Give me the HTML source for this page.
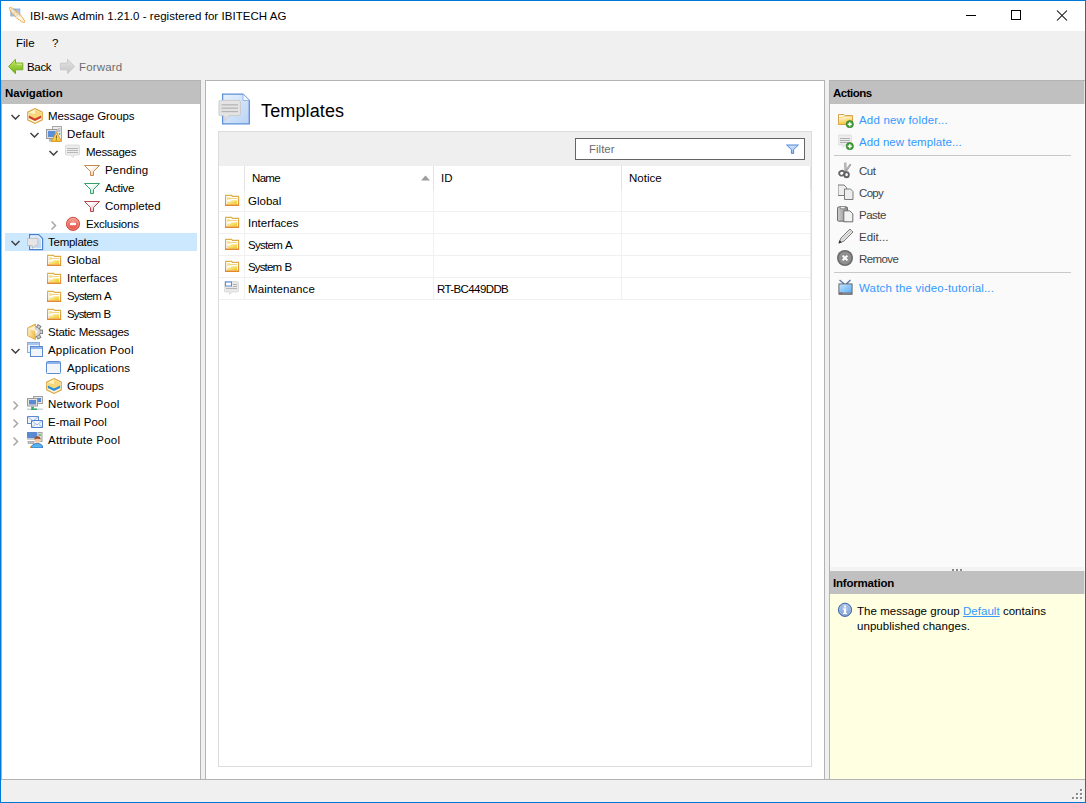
<!DOCTYPE html><html><head><meta charset="utf-8"><title>IBI-aws Admin</title><style>
*{margin:0;padding:0;box-sizing:border-box}
html,body{width:1086px;height:803px;overflow:hidden;background:#f0f0f0}
body{position:relative;font:12px/14px "Liberation Sans",sans-serif;color:#000}
.r{position:absolute;display:block}
.t{position:absolute;white-space:nowrap;font:11.5px/14px "Liberation Sans",sans-serif}
.b{font-weight:bold}
.lk{color:#3399ff}
.ac{color:#444}
</style></head><body><div class="r" style="left:0px;top:0px;width:1086px;height:31px;background:#fff;"></div>
<svg class="r" style="left:8px;top:6px" width="18" height="18" viewBox="0 0 18 18">
<rect x="2.8" y="3" width="9" height="7" fill="#a9c6e8" stroke="#88a8d0" stroke-width="0.8"/>
<path d="M5.5 9 L7.5 4.5 L9.5 9" fill="none" stroke="#a88420" stroke-width="1.3"/>
<ellipse cx="9" cy="9" rx="10.5" ry="2.3" transform="rotate(44 9 9)" fill="#fff4dc" fill-opacity="0.75" stroke="#eba84a" stroke-width="1.1" stroke-dasharray="1.4 0.6"/>
</svg>
<div class="t " style="left:30px;top:9px;letter-spacing:0.043px;">IBI-aws Admin 1.21.0 - registered for IBITECH AG</div>
<div class="r" style="left:966px;top:15px;width:10px;height:1px;background:#000;"></div>
<div class="r" style="left:1011px;top:10px;width:10px;height:10px;border:1px solid #000"></div>
<svg class="r" style="left:1056px;top:10px" width="12" height="11" viewBox="0 0 12 11"><path d="M1 0.5 L11 10.5 M11 0.5 L1 10.5" stroke="#000" stroke-width="1.05" fill="none"/></svg>
<div class="t " style="left:16px;top:36px;letter-spacing:0.000px;">File</div>
<div class="t " style="left:52px;top:36px;">?</div>
<svg class="r" style="left:8px;top:58px" width="16" height="16" viewBox="0 0 16 16">
<defs><linearGradient id="gb" x1="0" y1="0" x2="0" y2="1"><stop offset="0" stop-color="#c8ec6a"/><stop offset="1" stop-color="#6fae12"/></linearGradient></defs>
<path d="M0.6 8.5 L7.5 1.2 L7.5 5 L14.8 5 L14.8 11.8 L7.5 11.8 L7.5 15.8 Z" fill="url(#gb)" stroke="#6faa1c" stroke-width="0.9"/>
<path d="M8.5 6.2 L13.8 6.2" stroke="#e4f7b0" stroke-width="1" opacity="0.8"/>
</svg>
<div class="t " style="left:27px;top:60px;letter-spacing:-0.333px;">Back</div>
<svg class="r" style="left:59px;top:58px" width="17" height="17" viewBox="0 0 17 17">
<defs><linearGradient id="gf" x1="0" y1="0" x2="0" y2="1"><stop offset="0" stop-color="#e4e4e4"/><stop offset="1" stop-color="#c4c4c4"/></linearGradient></defs>
<path d="M15.6 8.5 L8.5 1.2 L8.5 5.2 L1.4 5.2 L1.4 11.8 L8.5 11.8 L8.5 15.8 Z" fill="url(#gf)" stroke="#c4c4c4" stroke-width="0.8"/>
</svg>
<div class="t " style="left:79px;top:60px;letter-spacing:0.167px;color:#6d6d6d">Forward</div>
<div class="r" style="left:1px;top:80px;width:200px;height:700px;background:#fff;border:1px solid #b3b3b3"></div>
<div class="r" style="left:2px;top:81px;width:198px;height:23px;background:#c0c0c0;"></div>
<div class="t b" style="left:5px;top:86px;letter-spacing:-0.111px;">Navigation</div>
<div class="r" style="left:205px;top:80px;width:620px;height:700px;background:#fff;border:1px solid #b3b3b3"></div>
<div class="r" style="left:829px;top:80px;width:256px;height:700px;background:#fafafa;border-left:1px solid #b3b3b3;border-top:1px solid #b3b3b3;border-bottom:1px solid #b3b3b3"></div>
<div class="r" style="left:830px;top:81px;width:255px;height:23px;background:#c0c0c0;"></div>
<div class="t b" style="left:833px;top:86px;letter-spacing:-0.500px;">Actions</div>
<div class="r" style="left:830px;top:567px;width:255px;height:4px;background:#f3f3f3;"></div>
<div class="r" style="left:953px;top:570px;width:2px;height:2px;background:#fff;"></div>
<div class="r" style="left:952px;top:569px;width:2px;height:2px;background:#8a8a8a;"></div>
<div class="r" style="left:957px;top:570px;width:2px;height:2px;background:#fff;"></div>
<div class="r" style="left:956px;top:569px;width:2px;height:2px;background:#8a8a8a;"></div>
<div class="r" style="left:961px;top:570px;width:2px;height:2px;background:#fff;"></div>
<div class="r" style="left:960px;top:569px;width:2px;height:2px;background:#8a8a8a;"></div>
<div class="r" style="left:830px;top:571px;width:255px;height:23px;background:#c0c0c0;"></div>
<div class="t b" style="left:833px;top:576px;letter-spacing:-0.200px;">Information</div>
<div class="r" style="left:830px;top:594px;width:255px;height:185px;background:#ffffe1;"></div>
<div class="r" style="left:1084px;top:81px;width:1px;height:698px;background:rgba(255,255,255,0.55);"></div>
<div class="r" style="left:1px;top:779px;width:1084px;height:1px;background:#b3b3b3;"></div>
<div class="r" style="left:1081px;top:790px;width:2px;height:2px;background:#fff;"></div>
<div class="r" style="left:1080px;top:789px;width:2px;height:2px;background:#8c8c8c;"></div>
<div class="r" style="left:1077px;top:794px;width:2px;height:2px;background:#fff;"></div>
<div class="r" style="left:1076px;top:793px;width:2px;height:2px;background:#8c8c8c;"></div>
<div class="r" style="left:1081px;top:794px;width:2px;height:2px;background:#fff;"></div>
<div class="r" style="left:1080px;top:793px;width:2px;height:2px;background:#8c8c8c;"></div>
<div class="r" style="left:1073px;top:798px;width:2px;height:2px;background:#fff;"></div>
<div class="r" style="left:1072px;top:797px;width:2px;height:2px;background:#8c8c8c;"></div>
<div class="r" style="left:1077px;top:798px;width:2px;height:2px;background:#fff;"></div>
<div class="r" style="left:1076px;top:797px;width:2px;height:2px;background:#8c8c8c;"></div>
<div class="r" style="left:1081px;top:798px;width:2px;height:2px;background:#fff;"></div>
<div class="r" style="left:1080px;top:797px;width:2px;height:2px;background:#8c8c8c;"></div>
<div class="r" style="left:5px;top:233px;width:192px;height:18px;background:#cce8ff;"></div>
<svg class="r" style="left:10px;top:113px" width="10" height="7" viewBox="0 0 10 7"><path d="M1.5 2 L5.5 6 L9.5 2" fill="none" stroke="#404040" stroke-width="1.5"/></svg>
<svg class="r" style="left:27px;top:108px" width="16" height="16" viewBox="0 0 16 16">
<path d="M8 0.6 L15.3 4.2 L15.3 11.8 L8 15.4 L0.7 11.8 L0.7 4.2 Z" fill="#fff8dc" stroke="#d9a43c" stroke-width="1.1"/>
<path d="M8 1.8 L14.2 4.8 L14.2 8.4 L8 11.4 L1.8 8.4 L1.8 4.8 Z" fill="#f7d77a"/>
<path d="M8 1.8 L8 6 L1.8 4.8 Z" fill="#fff3c4"/>
<path d="M1.8 7.6 L8 10.6 L14.2 7.6 L14.2 10 L8 13 L1.8 10 Z" fill="#d23c2c"/>
</svg>
<div class="t " style="left:48px;top:109px;letter-spacing:-0.077px;">Message Groups</div>
<svg class="r" style="left:29px;top:131px" width="10" height="7" viewBox="0 0 10 7"><path d="M1.5 2 L5.5 6 L9.5 2" fill="none" stroke="#404040" stroke-width="1.5"/></svg>
<svg class="r" style="left:46px;top:126px" width="16" height="16" viewBox="0 0 16 16">
<defs><linearGradient id="g1" x1="0" y1="0" x2="0" y2="1"><stop offset="0" stop-color="#fbe98a"/><stop offset="1" stop-color="#f2c631"/></linearGradient></defs>
<rect x="6.5" y="0.5" width="9" height="13.5" fill="#ececec" stroke="#a8a8a8"/>
<rect x="12" y="2.5" width="2.5" height="1" fill="#9a9a9a"/><rect x="12" y="4.5" width="2.5" height="1" fill="#9a9a9a"/>
<circle cx="13.6" cy="7.8" r="0.9" fill="#3cb043"/>
<rect x="0.5" y="3.5" width="10.5" height="9" fill="#dedede" stroke="#9a9a9a"/>
<rect x="2" y="5" width="7.5" height="6" fill="#5d8fd8"/>
<rect x="3" y="13" width="3" height="2.5" fill="#a9b6c8"/>
<path d="M10.4 6.4 L15.6 15.4 L5.2 15.4 Z" fill="url(#g1)" stroke="#db9a2a" stroke-width="1"/>
<rect x="9.9" y="9.3" width="1" height="3.2" fill="#7a5a1a"/><rect x="9.9" y="13.3" width="1" height="1" fill="#7a5a1a"/>
</svg>
<div class="t " style="left:67px;top:127px;letter-spacing:0.167px;">Default</div>
<svg class="r" style="left:48px;top:149px" width="10" height="7" viewBox="0 0 10 7"><path d="M1.5 2 L5.5 6 L9.5 2" fill="none" stroke="#404040" stroke-width="1.5"/></svg>
<svg class="r" style="left:65px;top:144px" width="16" height="16" viewBox="0 0 16 16">
<path d="M1.5 1 Q0.5 1 0.5 2 L0.5 10 Q0.5 11 1.5 11 L6 11 L8 13.5 L9 11 L13.5 11 Q14.5 11 14.5 10 L14.5 2 Q14.5 1 13.5 1 Z" fill="#ececec" stroke="#dcdcdc"/>
<rect x="2" y="4" width="11" height="1" fill="#b8b8b8"/><rect x="2" y="6" width="11" height="1" fill="#b8b8b8"/><rect x="2" y="8" width="11" height="1" fill="#b8b8b8"/>
</svg>
<div class="t " style="left:86px;top:145px;letter-spacing:-0.286px;">Messages</div>
<svg class="r" style="left:84px;top:165px" width="16" height="12" viewBox="0 0 16 12"><defs><linearGradient id="g2" x1="0" y1="0" x2="1" y2="1"><stop offset="0.3" stop-color="#fff"/><stop offset="1" stop-color="#e9c7a4"/></linearGradient></defs>
<path d="M0.5 0.5 L15.5 0.5 L9.5 6.5 L9.5 10.5 L6.5 10.5 L6.5 6.5 Z" fill="url(#g2)" stroke="#c7874e" stroke-width="1"/></svg>
<div class="t " style="left:105px;top:163px;letter-spacing:0.167px;">Pending</div>
<svg class="r" style="left:84px;top:183px" width="16" height="12" viewBox="0 0 16 12"><defs><linearGradient id="g3" x1="0" y1="0" x2="1" y2="1"><stop offset="0.3" stop-color="#fff"/><stop offset="1" stop-color="#a6dcc0"/></linearGradient></defs>
<path d="M0.5 0.5 L15.5 0.5 L9.5 6.5 L9.5 10.5 L6.5 10.5 L6.5 6.5 Z" fill="url(#g3)" stroke="#35a06a" stroke-width="1"/></svg>
<div class="t " style="left:105px;top:181px;letter-spacing:-0.400px;">Active</div>
<svg class="r" style="left:84px;top:201px" width="16" height="12" viewBox="0 0 16 12"><defs><linearGradient id="g4" x1="0" y1="0" x2="1" y2="1"><stop offset="0.3" stop-color="#fff"/><stop offset="1" stop-color="#e4aaaa"/></linearGradient></defs>
<path d="M0.5 0.5 L15.5 0.5 L9.5 6.5 L9.5 10.5 L6.5 10.5 L6.5 6.5 Z" fill="url(#g4)" stroke="#b8474a" stroke-width="1"/></svg>
<div class="t " style="left:105px;top:199px;letter-spacing:0.000px;">Completed</div>
<svg class="r" style="left:50px;top:220px" width="7" height="10" viewBox="0 0 7 10"><path d="M1.5 1.5 L5.5 5.5 L1.5 9.5" fill="none" stroke="#a6a6a6" stroke-width="1.5"/></svg>
<svg class="r" style="left:65px;top:216px" width="16" height="16" viewBox="0 0 16 16">
<defs><radialGradient id="g5" cx="0.5" cy="0.3" r="0.7"><stop offset="0" stop-color="#f7a49a"/><stop offset="1" stop-color="#de3b2f"/></radialGradient></defs>
<circle cx="8" cy="7.9" r="6.6" fill="url(#g5)" stroke="#cf4a3c" stroke-width="0.9"/>
<circle cx="8" cy="7.9" r="5.4" fill="none" stroke="#fbd0c8" stroke-width="0.7" opacity="0.7"/>
<rect x="5" y="6.9" width="6" height="2.2" fill="#fff"/>
</svg>
<div class="t " style="left:86px;top:217px;letter-spacing:-0.222px;">Exclusions</div>
<svg class="r" style="left:10px;top:239px" width="10" height="7" viewBox="0 0 10 7"><path d="M1.5 2 L5.5 6 L9.5 2" fill="none" stroke="#404040" stroke-width="1.5"/></svg>
<svg class="r" style="left:27px;top:234px" width="17" height="17" viewBox="0 0 17 17">
<defs><linearGradient id="g6" x1="0" y1="0" x2="1" y2="1"><stop offset="0" stop-color="#e6f0fc"/><stop offset="1" stop-color="#bcd5f4"/></linearGradient></defs>
<path d="M2.6 0.6 L11.6 0.6 L15.6 4.6 L15.6 15.6 L2.6 15.6 Z" fill="#fff" stroke="#4a7fd0" stroke-width="1.2"/>
<path d="M3.8 1.9 L11 1.9 L14.3 5.2 L14.3 14.3 L3.8 14.3 Z" fill="url(#g6)"/>
<path d="M1 4.4 L10.2 4.4 Q10.9 4.4 10.9 5.1 L10.9 10.9 Q10.9 11.6 10.2 11.6 L8 11.6 L5.6 14.4 L5.3 11.6 L1 11.6 Q0.3 11.6 0.3 10.9 L0.3 5.1 Q0.3 4.4 1 4.4 Z" fill="#e6e6e6" stroke="#bcbcbc" stroke-width="0.9"/>
</svg>
<div class="t " style="left:48px;top:235px;letter-spacing:-0.250px;">Templates</div>
<svg class="r" style="left:47px;top:254px" width="16" height="13" viewBox="0 0 16 13">
<defs><linearGradient id="g7o" x1="0" y1="0" x2="0" y2="1"><stop offset="0" stop-color="#dcb04a"/><stop offset="1" stop-color="#e48a2a"/></linearGradient>
<linearGradient id="g7f" x1="0" y1="0" x2="1" y2="1"><stop offset="0" stop-color="#fdf3c4"/><stop offset="1" stop-color="#f1c712"/></linearGradient></defs>
<path d="M0.6 1.4 L6.6 1.4 L7.4 2.4 L13.6 2.4 L13.6 11.4 L0.6 11.4 Z" fill="#fffef8" stroke="url(#g7o)" stroke-width="1.1"/>
<rect x="2" y="3.3" width="3.2" height="2.3" fill="#f6dd82"/>
<rect x="5" y="4" width="7" height="1" fill="#efd580"/>
<path d="M2 7.4 L5.4 7.4 L6.4 6.3 L12.1 6.3 L12.1 10.6 L2 10.6 Z" fill="url(#g7f)"/>
<rect x="0.4" y="10.6" width="13.4" height="1.3" fill="#e2892e"/>
</svg>
<div class="t " style="left:67px;top:253px;letter-spacing:0.000px;">Global</div>
<svg class="r" style="left:47px;top:272px" width="16" height="13" viewBox="0 0 16 13">
<defs><linearGradient id="g8o" x1="0" y1="0" x2="0" y2="1"><stop offset="0" stop-color="#dcb04a"/><stop offset="1" stop-color="#e48a2a"/></linearGradient>
<linearGradient id="g8f" x1="0" y1="0" x2="1" y2="1"><stop offset="0" stop-color="#fdf3c4"/><stop offset="1" stop-color="#f1c712"/></linearGradient></defs>
<path d="M0.6 1.4 L6.6 1.4 L7.4 2.4 L13.6 2.4 L13.6 11.4 L0.6 11.4 Z" fill="#fffef8" stroke="url(#g8o)" stroke-width="1.1"/>
<rect x="2" y="3.3" width="3.2" height="2.3" fill="#f6dd82"/>
<rect x="5" y="4" width="7" height="1" fill="#efd580"/>
<path d="M2 7.4 L5.4 7.4 L6.4 6.3 L12.1 6.3 L12.1 10.6 L2 10.6 Z" fill="url(#g8f)"/>
<rect x="0.4" y="10.6" width="13.4" height="1.3" fill="#e2892e"/>
</svg>
<div class="t " style="left:67px;top:271px;letter-spacing:0.000px;">Interfaces</div>
<svg class="r" style="left:47px;top:290px" width="16" height="13" viewBox="0 0 16 13">
<defs><linearGradient id="g9o" x1="0" y1="0" x2="0" y2="1"><stop offset="0" stop-color="#dcb04a"/><stop offset="1" stop-color="#e48a2a"/></linearGradient>
<linearGradient id="g9f" x1="0" y1="0" x2="1" y2="1"><stop offset="0" stop-color="#fdf3c4"/><stop offset="1" stop-color="#f1c712"/></linearGradient></defs>
<path d="M0.6 1.4 L6.6 1.4 L7.4 2.4 L13.6 2.4 L13.6 11.4 L0.6 11.4 Z" fill="#fffef8" stroke="url(#g9o)" stroke-width="1.1"/>
<rect x="2" y="3.3" width="3.2" height="2.3" fill="#f6dd82"/>
<rect x="5" y="4" width="7" height="1" fill="#efd580"/>
<path d="M2 7.4 L5.4 7.4 L6.4 6.3 L12.1 6.3 L12.1 10.6 L2 10.6 Z" fill="url(#g9f)"/>
<rect x="0.4" y="10.6" width="13.4" height="1.3" fill="#e2892e"/>
</svg>
<div class="t " style="left:67px;top:289px;letter-spacing:-0.714px;word-spacing:1.00px;">System A</div>
<svg class="r" style="left:47px;top:308px" width="16" height="13" viewBox="0 0 16 13">
<defs><linearGradient id="g10o" x1="0" y1="0" x2="0" y2="1"><stop offset="0" stop-color="#dcb04a"/><stop offset="1" stop-color="#e48a2a"/></linearGradient>
<linearGradient id="g10f" x1="0" y1="0" x2="1" y2="1"><stop offset="0" stop-color="#fdf3c4"/><stop offset="1" stop-color="#f1c712"/></linearGradient></defs>
<path d="M0.6 1.4 L6.6 1.4 L7.4 2.4 L13.6 2.4 L13.6 11.4 L0.6 11.4 Z" fill="#fffef8" stroke="url(#g10o)" stroke-width="1.1"/>
<rect x="2" y="3.3" width="3.2" height="2.3" fill="#f6dd82"/>
<rect x="5" y="4" width="7" height="1" fill="#efd580"/>
<path d="M2 7.4 L5.4 7.4 L6.4 6.3 L12.1 6.3 L12.1 10.6 L2 10.6 Z" fill="url(#g10f)"/>
<rect x="0.4" y="10.6" width="13.4" height="1.3" fill="#e2892e"/>
</svg>
<div class="t " style="left:67px;top:307px;letter-spacing:-0.857px;word-spacing:1.00px;">System B</div>
<svg class="r" style="left:27px;top:323px" width="17" height="17" viewBox="0 0 17 17">
<defs><linearGradient id="g11" x1="0" y1="0" x2="1" y2="0.3"><stop offset="0" stop-color="#fff6d6"/><stop offset="1" stop-color="#f0c050"/></linearGradient>
<clipPath id="g11c"><rect x="8.4" y="0" width="9" height="17"/></clipPath></defs>
<path d="M8.4 1 L0.6 5 L0.6 12.6 L8.4 16.6 Z" fill="url(#g11)" stroke="#dcaa40" stroke-width="1"/>
<path d="M8.4 2.5 L2 5.8 L8.4 8.5 Z" fill="#fff8e0" opacity="0.8"/>
<g clip-path="url(#g11c)">
<circle cx="8.6" cy="8.8" r="5" fill="#d4d4d4" stroke="#8a8a8a" stroke-width="1"/>
<rect x="12.8" y="7.1" width="2.8" height="3.4" fill="#d0d0d0" stroke="#7a7a7a" stroke-width="0.9"/>
<rect x="10" y="2.3" width="3.4" height="3" fill="#d0d0d0" stroke="#7a7a7a" stroke-width="0.9" transform="rotate(30 11.7 3.8)"/>
<rect x="10" y="12.3" width="3.4" height="3" fill="#d0d0d0" stroke="#7a7a7a" stroke-width="0.9" transform="rotate(-30 11.7 13.8)"/>
<circle cx="8.6" cy="8.8" r="4.3" fill="#d6d6d6"/>
<circle cx="8.6" cy="8.8" r="1.8" fill="#fff"/>
</g>
</svg>
<div class="t " style="left:48px;top:325px;letter-spacing:-0.245px;word-spacing:0.43px;">Static Messages</div>
<svg class="r" style="left:10px;top:347px" width="10" height="7" viewBox="0 0 10 7"><path d="M1.5 2 L5.5 6 L9.5 2" fill="none" stroke="#404040" stroke-width="1.5"/></svg>
<svg class="r" style="left:27px;top:342px" width="16" height="16" viewBox="0 0 16 16">
<rect x="0.5" y="0.5" width="12" height="10" fill="#eef3fb" stroke="#8aaee0"/>
<rect x="1" y="1" width="11" height="2" fill="#a9c5ee"/>
<rect x="3.5" y="4.5" width="12" height="10" fill="#f2f5fb" stroke="#5b8ad0"/>
<rect x="4" y="5" width="11" height="2" fill="#8fb3ea"/>
</svg>
<div class="t " style="left:48px;top:343px;letter-spacing:0.200px;">Application Pool</div>
<svg class="r" style="left:46px;top:360px" width="16" height="16" viewBox="0 0 16 16">
<rect x="0.5" y="1.5" width="14" height="12" rx="1" fill="#f2f5fb" stroke="#5b8ad0"/>
<rect x="1" y="2" width="13" height="2" fill="#8fb3ea"/>
</svg>
<div class="t " style="left:67px;top:361px;letter-spacing:0.091px;">Applications</div>
<svg class="r" style="left:46px;top:378px" width="16" height="16" viewBox="0 0 16 16">
<path d="M8 0.6 L15.3 4.2 L15.3 11.8 L8 15.4 L0.7 11.8 L0.7 4.2 Z" fill="#fff8dc" stroke="#d9a43c" stroke-width="1.1"/>
<path d="M8 1.8 L14.2 4.8 L14.2 8.4 L8 11.4 L1.8 8.4 L1.8 4.8 Z" fill="#f7d77a"/>
<path d="M8 1.8 L8 6 L1.8 4.8 Z" fill="#fff3c4"/>
<path d="M1.8 7.6 L8 10.6 L14.2 7.6 L14.2 10 L8 13 L1.8 10 Z" fill="#2e8fd8"/>
</svg>
<div class="t " style="left:67px;top:379px;letter-spacing:-0.200px;">Groups</div>
<svg class="r" style="left:12px;top:400px" width="7" height="10" viewBox="0 0 7 10"><path d="M1.5 1.5 L5.5 5.5 L1.5 9.5" fill="none" stroke="#a6a6a6" stroke-width="1.5"/></svg>
<svg class="r" style="left:27px;top:396px" width="16" height="16" viewBox="0 0 16 16">
<rect x="6.5" y="0.5" width="9" height="7" fill="#e8e8e8" stroke="#a0a0a0"/>
<rect x="8" y="2" width="6" height="4" fill="#5b8ad0"/>
<rect x="0.5" y="2.5" width="10" height="7.5" fill="#e4e4e4" stroke="#9a9a9a"/>
<rect x="2" y="4" width="7" height="4.5" fill="#5b8ad0"/>
<rect x="4" y="10.5" width="3" height="2" fill="#9a9a9a"/>
<rect x="0" y="12.5" width="16" height="1.5" fill="#c9d6d6"/>
<rect x="5" y="11" width="1.2" height="2" fill="#3aa76d"/>
<rect x="4" y="12.5" width="6" height="1.5" fill="#3aa76d"/>
</svg>
<div class="t " style="left:48px;top:397px;letter-spacing:0.273px;">Network Pool</div>
<svg class="r" style="left:12px;top:418px" width="7" height="10" viewBox="0 0 7 10"><path d="M1.5 1.5 L5.5 5.5 L1.5 9.5" fill="none" stroke="#a6a6a6" stroke-width="1.5"/></svg>
<svg class="r" style="left:27px;top:415px" width="16" height="16" viewBox="0 0 16 16">
<rect x="0.5" y="1.5" width="11" height="7" fill="#eef3fb" stroke="#5b8ad0"/>
<path d="M0.5 1.5 L6 6 L11.5 1.5" fill="none" stroke="#9ab7e3"/>
<rect x="4.5" y="5.5" width="11" height="7" fill="#f2f6fc" stroke="#4d7fcf"/>
<path d="M4.5 5.5 L10 10 L15.5 5.5 M4.5 12.5 L8 9.5 M15.5 12.5 L12 9.5" fill="none" stroke="#9ab7e3"/>
</svg>
<div class="t " style="left:48px;top:415px;letter-spacing:0.000px;">E-mail Pool</div>
<svg class="r" style="left:12px;top:436px" width="7" height="10" viewBox="0 0 7 10"><path d="M1.5 1.5 L5.5 5.5 L1.5 9.5" fill="none" stroke="#a6a6a6" stroke-width="1.5"/></svg>
<svg class="r" style="left:27px;top:432px" width="16" height="16" viewBox="0 0 16 16">
<rect x="11" y="0.5" width="4" height="9" fill="#e4e4e4" stroke="#a0a0a0"/>
<circle cx="13" cy="3" r="0.9" fill="#3cb043"/>
<rect x="0" y="0" width="10" height="6.5" fill="#5b8ad0"/>
<rect x="0" y="6.5" width="10" height="1.5" fill="#cfcfcf"/>
<rect x="1" y="9.5" width="6" height="2" fill="#bdbdbd" stroke="#888" stroke-width="0.5"/>
<path d="M4 16 Q4.5 11.5 10.5 11.5 Q15.5 11.5 16 16 Z" fill="#57b4f0" stroke="#2d5fb3" stroke-width="0.8"/>
<circle cx="10.5" cy="8" r="3" fill="#f6c9a0"/>
<path d="M7.3 7.5 Q7.5 4.2 10.5 4.3 Q13.6 4.3 13.7 7.5 Q11.5 6 7.3 7.5 Z" fill="#a0522d"/>
<rect x="3" y="14.5" width="1.5" height="1.5" fill="#e8902a"/>
</svg>
<div class="t " style="left:48px;top:433px;letter-spacing:0.231px;">Attribute Pool</div>
<svg class="r" style="left:218px;top:93px" width="34" height="34" viewBox="0 0 34 34">
<defs><linearGradient id="g12" x1="0" y1="0" x2="1" y2="1"><stop offset="0" stop-color="#e8f1fd"/><stop offset="1" stop-color="#b9d3f4"/></linearGradient></defs>
<path d="M4.6 1.2 L25 1.2 L31.3 7.5 L31.3 30.8 L4.6 30.8 Z" fill="url(#g12)" stroke="#5b8fd6" stroke-width="1.3"/>
<path d="M25 1.2 L25 7.5 L31.3 7.5" fill="#f6f9fe" stroke="#8fb3e6" stroke-width="0.9"/>
<path d="M2.6 7.4 Q1 7.4 1 9 L1 21 Q1 22.6 2.6 22.6 L6 22.6 L6 27.8 L11 22.6 L20.8 22.6 Q22.4 22.6 22.4 21 L22.4 9 Q22.4 7.4 20.8 7.4 Z" fill="#e4e4e4" stroke="#cacaca" stroke-width="1"/>
<rect x="3.5" y="11.2" width="16.5" height="1.3" fill="#b5b5b5"/><rect x="3.5" y="14.5" width="16.5" height="1.3" fill="#b5b5b5"/><rect x="3.5" y="17.9" width="16.5" height="1.3" fill="#b5b5b5"/>
</svg>
<div class="t " style="left:261px;top:101px;letter-spacing:0.125px;font-size:18px;line-height:20px">Templates</div>
<div class="r" style="left:218px;top:131px;width:594px;height:636px;border:1px solid #dcdcdc;background:#fff"></div>
<div class="r" style="left:219px;top:132px;width:592px;height:34px;background:#efefef;"></div>
<div class="r" style="left:575px;top:138px;width:230px;height:22px;border:1px solid #646464;background:#fff"></div>
<div class="t " style="left:589px;top:142px;letter-spacing:0.000px;color:#6d6d6d">Filter</div>
<svg class="r" style="left:786px;top:144px" width="13" height="10" viewBox="0 0 13 10">
<defs><linearGradient id="fl" x1="0" y1="0" x2="0" y2="1"><stop offset="0" stop-color="#cfe3fb"/><stop offset="1" stop-color="#9cc2ef"/></linearGradient></defs>
<path d="M0.6 1 L12.4 1 L7.6 5.6 L7.6 9.4 L5.4 9.4 L5.4 5.6 Z" fill="url(#fl)" stroke="#4f86d6" stroke-width="1"/>
</svg>
<div class="r" style="left:244px;top:166px;width:1px;height:24px;background:#e3e3e3;"></div>
<div class="r" style="left:433px;top:166px;width:1px;height:24px;background:#e3e3e3;"></div>
<div class="r" style="left:621px;top:166px;width:1px;height:24px;background:#e3e3e3;"></div>
<div class="r" style="left:810px;top:166px;width:1px;height:24px;background:#e3e3e3;"></div>
<div class="t " style="left:252px;top:171px;letter-spacing:-0.667px;">Name</div>
<svg class="r" style="left:421px;top:175px" width="10" height="6" viewBox="0 0 10 6"><path d="M0 5.5 L4.5 0.5 L9 5.5 Z" fill="#9d9d9d"/></svg>
<div class="t " style="left:441px;top:171px;">ID</div>
<div class="t " style="left:629px;top:171px;letter-spacing:0.000px;">Notice</div>
<div class="r" style="left:219px;top:211px;width:592px;height:1px;background:#f0f0f0;"></div>
<div class="r" style="left:244px;top:190px;width:1px;height:21px;background:#f0f0f0;"></div>
<div class="r" style="left:433px;top:190px;width:1px;height:21px;background:#f0f0f0;"></div>
<div class="r" style="left:621px;top:190px;width:1px;height:21px;background:#f0f0f0;"></div>
<div class="r" style="left:810px;top:190px;width:1px;height:21px;background:#f0f0f0;"></div>
<svg class="r" style="left:225px;top:194px" width="16" height="13" viewBox="0 0 16 13">
<defs><linearGradient id="g13o" x1="0" y1="0" x2="0" y2="1"><stop offset="0" stop-color="#dcb04a"/><stop offset="1" stop-color="#e48a2a"/></linearGradient>
<linearGradient id="g13f" x1="0" y1="0" x2="1" y2="1"><stop offset="0" stop-color="#fdf3c4"/><stop offset="1" stop-color="#f1c712"/></linearGradient></defs>
<path d="M0.6 1.4 L6.6 1.4 L7.4 2.4 L13.6 2.4 L13.6 11.4 L0.6 11.4 Z" fill="#fffef8" stroke="url(#g13o)" stroke-width="1.1"/>
<rect x="2" y="3.3" width="3.2" height="2.3" fill="#f6dd82"/>
<rect x="5" y="4" width="7" height="1" fill="#efd580"/>
<path d="M2 7.4 L5.4 7.4 L6.4 6.3 L12.1 6.3 L12.1 10.6 L2 10.6 Z" fill="url(#g13f)"/>
<rect x="0.4" y="10.6" width="13.4" height="1.3" fill="#e2892e"/>
</svg>
<div class="t " style="left:248px;top:194px;letter-spacing:0.000px;">Global</div>
<div class="r" style="left:219px;top:233px;width:592px;height:1px;background:#f0f0f0;"></div>
<div class="r" style="left:244px;top:212px;width:1px;height:21px;background:#f0f0f0;"></div>
<div class="r" style="left:433px;top:212px;width:1px;height:21px;background:#f0f0f0;"></div>
<div class="r" style="left:621px;top:212px;width:1px;height:21px;background:#f0f0f0;"></div>
<div class="r" style="left:810px;top:212px;width:1px;height:21px;background:#f0f0f0;"></div>
<svg class="r" style="left:225px;top:216px" width="16" height="13" viewBox="0 0 16 13">
<defs><linearGradient id="g14o" x1="0" y1="0" x2="0" y2="1"><stop offset="0" stop-color="#dcb04a"/><stop offset="1" stop-color="#e48a2a"/></linearGradient>
<linearGradient id="g14f" x1="0" y1="0" x2="1" y2="1"><stop offset="0" stop-color="#fdf3c4"/><stop offset="1" stop-color="#f1c712"/></linearGradient></defs>
<path d="M0.6 1.4 L6.6 1.4 L7.4 2.4 L13.6 2.4 L13.6 11.4 L0.6 11.4 Z" fill="#fffef8" stroke="url(#g14o)" stroke-width="1.1"/>
<rect x="2" y="3.3" width="3.2" height="2.3" fill="#f6dd82"/>
<rect x="5" y="4" width="7" height="1" fill="#efd580"/>
<path d="M2 7.4 L5.4 7.4 L6.4 6.3 L12.1 6.3 L12.1 10.6 L2 10.6 Z" fill="url(#g14f)"/>
<rect x="0.4" y="10.6" width="13.4" height="1.3" fill="#e2892e"/>
</svg>
<div class="t " style="left:248px;top:216px;letter-spacing:0.000px;">Interfaces</div>
<div class="r" style="left:219px;top:255px;width:592px;height:1px;background:#f0f0f0;"></div>
<div class="r" style="left:244px;top:234px;width:1px;height:21px;background:#f0f0f0;"></div>
<div class="r" style="left:433px;top:234px;width:1px;height:21px;background:#f0f0f0;"></div>
<div class="r" style="left:621px;top:234px;width:1px;height:21px;background:#f0f0f0;"></div>
<div class="r" style="left:810px;top:234px;width:1px;height:21px;background:#f0f0f0;"></div>
<svg class="r" style="left:225px;top:238px" width="16" height="13" viewBox="0 0 16 13">
<defs><linearGradient id="g15o" x1="0" y1="0" x2="0" y2="1"><stop offset="0" stop-color="#dcb04a"/><stop offset="1" stop-color="#e48a2a"/></linearGradient>
<linearGradient id="g15f" x1="0" y1="0" x2="1" y2="1"><stop offset="0" stop-color="#fdf3c4"/><stop offset="1" stop-color="#f1c712"/></linearGradient></defs>
<path d="M0.6 1.4 L6.6 1.4 L7.4 2.4 L13.6 2.4 L13.6 11.4 L0.6 11.4 Z" fill="#fffef8" stroke="url(#g15o)" stroke-width="1.1"/>
<rect x="2" y="3.3" width="3.2" height="2.3" fill="#f6dd82"/>
<rect x="5" y="4" width="7" height="1" fill="#efd580"/>
<path d="M2 7.4 L5.4 7.4 L6.4 6.3 L12.1 6.3 L12.1 10.6 L2 10.6 Z" fill="url(#g15f)"/>
<rect x="0.4" y="10.6" width="13.4" height="1.3" fill="#e2892e"/>
</svg>
<div class="t " style="left:248px;top:238px;letter-spacing:-0.714px;word-spacing:1.00px;">System A</div>
<div class="r" style="left:219px;top:277px;width:592px;height:1px;background:#f0f0f0;"></div>
<div class="r" style="left:244px;top:256px;width:1px;height:21px;background:#f0f0f0;"></div>
<div class="r" style="left:433px;top:256px;width:1px;height:21px;background:#f0f0f0;"></div>
<div class="r" style="left:621px;top:256px;width:1px;height:21px;background:#f0f0f0;"></div>
<div class="r" style="left:810px;top:256px;width:1px;height:21px;background:#f0f0f0;"></div>
<svg class="r" style="left:225px;top:260px" width="16" height="13" viewBox="0 0 16 13">
<defs><linearGradient id="g16o" x1="0" y1="0" x2="0" y2="1"><stop offset="0" stop-color="#dcb04a"/><stop offset="1" stop-color="#e48a2a"/></linearGradient>
<linearGradient id="g16f" x1="0" y1="0" x2="1" y2="1"><stop offset="0" stop-color="#fdf3c4"/><stop offset="1" stop-color="#f1c712"/></linearGradient></defs>
<path d="M0.6 1.4 L6.6 1.4 L7.4 2.4 L13.6 2.4 L13.6 11.4 L0.6 11.4 Z" fill="#fffef8" stroke="url(#g16o)" stroke-width="1.1"/>
<rect x="2" y="3.3" width="3.2" height="2.3" fill="#f6dd82"/>
<rect x="5" y="4" width="7" height="1" fill="#efd580"/>
<path d="M2 7.4 L5.4 7.4 L6.4 6.3 L12.1 6.3 L12.1 10.6 L2 10.6 Z" fill="url(#g16f)"/>
<rect x="0.4" y="10.6" width="13.4" height="1.3" fill="#e2892e"/>
</svg>
<div class="t " style="left:248px;top:260px;letter-spacing:-0.857px;word-spacing:1.00px;">System B</div>
<div class="r" style="left:219px;top:299px;width:592px;height:1px;background:#f0f0f0;"></div>
<div class="r" style="left:244px;top:278px;width:1px;height:21px;background:#f0f0f0;"></div>
<div class="r" style="left:433px;top:278px;width:1px;height:21px;background:#f0f0f0;"></div>
<div class="r" style="left:621px;top:278px;width:1px;height:21px;background:#f0f0f0;"></div>
<div class="r" style="left:810px;top:278px;width:1px;height:21px;background:#f0f0f0;"></div>
<svg class="r" style="left:224px;top:280px" width="16" height="16" viewBox="0 0 16 16">
<path d="M1.5 1.5 L13 1.5 Q14.5 1.5 14.5 3 L14.5 10.5 Q14.5 12 13 12 L8 12 L5.5 14.5 L5.5 12 L1.5 12 Q0 12 0 10.5 L0 3 Q0 1.5 1.5 1.5 Z" fill="#e8e8e8" stroke="#d8d8d8" stroke-width="0.8"/>
<rect x="1" y="1" width="7" height="5.5" fill="#5b8ad0"/>
<rect x="2" y="2.5" width="5" height="3" fill="#fff"/>
<rect x="1" y="1" width="7" height="1.2" fill="#86aee8"/>
<rect x="9" y="4" width="4" height="1" fill="#b5b5b5"/><rect x="9" y="6" width="4" height="1" fill="#b5b5b5"/><rect x="2" y="8" width="11" height="1" fill="#b5b5b5"/>
</svg>
<div class="t " style="left:248px;top:282px;letter-spacing:0.100px;">Maintenance</div>
<div class="t " style="left:437px;top:282px;letter-spacing:-0.600px;">RT-BC449DDB</div>
<svg class="r" style="left:838px;top:112px" width="16" height="16" viewBox="0 0 16 16">
<defs><linearGradient id="g17" x1="0" y1="0" x2="0.3" y2="1"><stop offset="0" stop-color="#fffcef"/><stop offset="0.45" stop-color="#fbeeb8"/><stop offset="1" stop-color="#f1c634"/></linearGradient></defs>
<path d="M0.5 2.5 L6 2.5 L7 3.5 L14.5 3.5 L14.5 12.5 L0.5 12.5 Z" fill="url(#g17)" stroke="#dba24c" stroke-width="1"/>
<path d="M1.5 5.5 L4.5 5.5 L5.5 4.5 L13.5 4.5" fill="none" stroke="#f3d78c" stroke-width="1"/>
<circle cx="11.8" cy="12.2" r="3.6" fill="#45a03c" stroke="#2b7a28" stroke-width="0.7"/>
<path d="M11.8 10.2 L11.8 14.2 M9.8 12.2 L13.8 12.2" stroke="#fff" stroke-width="1.5"/>
</svg>
<div class="t lk" style="left:859px;top:113px;letter-spacing:0.188px;">Add new folder...</div>
<svg class="r" style="left:838px;top:134px" width="16" height="16" viewBox="0 0 16 16">
<path d="M1 1 L12.5 1 Q13.5 1 13.5 2 L13.5 10 Q13.5 11 12.5 11 L7 11 L5 13.5 L5 11 L1 11 Q0 11 0 10 L0 2 Q0 1 1 1 Z" fill="#ececec" stroke="#dcdcdc" stroke-width="0.8"/>
<rect x="2" y="4" width="10" height="1" fill="#b0b0b0"/><rect x="2" y="6" width="10" height="1" fill="#b0b0b0"/><rect x="2" y="8" width="10" height="1" fill="#b0b0b0"/>
<circle cx="11.8" cy="12.2" r="3.6" fill="#45a03c" stroke="#2b7a28" stroke-width="0.7"/>
<path d="M11.8 10.2 L11.8 14.2 M9.8 12.2 L13.8 12.2" stroke="#fff" stroke-width="1.5"/>
</svg>
<div class="t lk" style="left:859px;top:135px;letter-spacing:0.056px;">Add new template...</div>
<div class="r" style="left:834px;top:155px;width:237px;height:1px;background:#c8c8c8;"></div>
<svg class="r" style="left:838px;top:162px" width="16" height="17" viewBox="0 0 16 17">
<path d="M7.3 0.6 L7.6 10.5" stroke="#8a8a8a" stroke-width="2"/>
<path d="M7.3 0.8 L7.5 9.5" stroke="#d6d6d6" stroke-width="0.7"/>
<path d="M12.6 2.3 L7.6 9.6" stroke="#8e8e8e" stroke-width="1.8"/>
<path d="M12.4 2.6 L8 9" stroke="#d8d8d8" stroke-width="0.6"/>
<ellipse cx="3.8" cy="11.2" rx="2.6" ry="2.4" transform="rotate(-25 3.8 11.2)" fill="#fff" stroke="#666" stroke-width="1.9"/>
<ellipse cx="8.6" cy="12.7" rx="2.2" ry="2.6" fill="#fff" stroke="#606060" stroke-width="1.9"/>
</svg>
<div class="t ac" style="left:859px;top:164px;letter-spacing:-0.500px;">Cut</div>
<svg class="r" style="left:838px;top:184px" width="17" height="17" viewBox="0 0 17 17">
<path d="M0 1 L6 1 L8.5 3.5 L8.5 11.5 L0 11.5 Z" fill="#ededed" stroke="#7c7c7c" stroke-width="1"/>
<path d="M6.5 5 L12.5 5 L15 7.5 L15 15.5 L6.5 15.5 Z" fill="#ededed" stroke="#7c7c7c" stroke-width="1"/>
</svg>
<div class="t ac" style="left:859px;top:186px;letter-spacing:-0.667px;">Copy</div>
<svg class="r" style="left:837px;top:206px" width="17" height="17" viewBox="0 0 17 17">
<defs><linearGradient id="g18" x1="0" y1="0" x2="1" y2="0"><stop offset="0" stop-color="#cfcfcf"/><stop offset="1" stop-color="#8c8c8c"/></linearGradient></defs>
<rect x="0.5" y="0.9" width="10" height="14.3" rx="1.2" fill="url(#g18)" stroke="#6e6e6e"/>
<rect x="3.2" y="0.4" width="4.8" height="2.4" fill="#f2f2f2" stroke="#7a7a7a" stroke-width="0.7"/>
<path d="M6.8 4.8 L12.8 4.8 L15.8 7.8 L15.8 15.8 L6.8 15.8 Z" fill="#f2f2f2" stroke="#6e6e6e" stroke-width="1"/>
</svg>
<div class="t ac" style="left:859px;top:208px;letter-spacing:-0.500px;">Paste</div>
<svg class="r" style="left:838px;top:228px" width="16" height="16" viewBox="0 0 16 16">
<path d="M12 1 L15 4 L6 13 L0.8 15.2 L3 10 Z" fill="#e2e2e2" stroke="#7a7a7a" stroke-width="1"/>
<path d="M4.3 11.6 L13.4 2.6" stroke="#c4c4c4" stroke-width="1"/>
<path d="M0.8 15.2 L1.6 12.3 L3.7 14.3 Z" fill="#222"/>
</svg>
<div class="t ac" style="left:859px;top:230px;letter-spacing:0.000px;">Edit...</div>
<svg class="r" style="left:836px;top:249px" width="18" height="18" viewBox="0 0 18 18">
<circle cx="9" cy="9" r="8" fill="#6b6b6b"/>
<circle cx="9" cy="9" r="6.4" fill="#8f8f8f"/>
<path d="M6.6 6.6 L11.4 11.4 M11.4 6.6 L6.6 11.4" stroke="#fff" stroke-width="2"/>
</svg>
<div class="t ac" style="left:859px;top:252px;letter-spacing:-0.600px;">Remove</div>
<div class="r" style="left:834px;top:272px;width:237px;height:1px;background:#c8c8c8;"></div>
<svg class="r" style="left:838px;top:279px" width="16" height="17" viewBox="0 0 16 17">
<defs><linearGradient id="g19" x1="0" y1="0" x2="1" y2="1"><stop offset="0" stop-color="#c4e2ff"/><stop offset="0.5" stop-color="#8cc8fb"/><stop offset="1" stop-color="#5ab0f5"/></linearGradient></defs>
<path d="M1.5 1 L6 4.8 M12.5 1 L8.5 4.8" stroke="#5a78aa" stroke-width="1.4"/>
<rect x="0.5" y="4.5" width="14" height="11.2" fill="#4a4a4a"/>
<rect x="1.3" y="5.3" width="12.4" height="8.4" fill="url(#g19)"/>
<rect x="1.3" y="13.7" width="12.4" height="1.2" fill="#8a8a8a"/>
<rect x="2.6" y="13.6" width="1.5" height="1.3" fill="#e22"/>
</svg>
<div class="t lk" style="left:859px;top:281px;letter-spacing:0.192px;">Watch the video-tutorial...</div>
<svg class="r" style="left:837px;top:602px" width="16" height="16" viewBox="0 0 16 16">
<defs><radialGradient id="g20" cx="0.5" cy="0.4" r="0.6"><stop offset="0" stop-color="#c6d8f2"/><stop offset="1" stop-color="#5f89c8"/></radialGradient></defs>
<circle cx="8" cy="7.8" r="6.6" fill="url(#g20)" stroke="#3d66ac" stroke-width="1"/>
<circle cx="8" cy="7.8" r="5.3" fill="none" stroke="#e8f0fa" stroke-width="0.6" opacity="0.7"/>
<rect x="7" y="3.6" width="2" height="1.7" fill="#fff"/>
<path d="M6.2 6.4 L9 6.4 L9 10.8 L10 10.8 L10 12.1 L6 12.1 L6 10.8 L7 10.8 L7 7.7 L6.2 7.7 Z" fill="#fff"/>
</svg>
<div class="t " style="left:857px;top:604px;letter-spacing:0.030px;">The message group <span style="color:#3399ff;text-decoration:underline">Default</span> contains</div>
<div class="t " style="left:857px;top:619px;letter-spacing:0.053px;">unpublished changes.</div>
<div class="r" style="left:0;top:0;width:1086px;height:803px;border:1px solid #0078d7"></div></body></html>
